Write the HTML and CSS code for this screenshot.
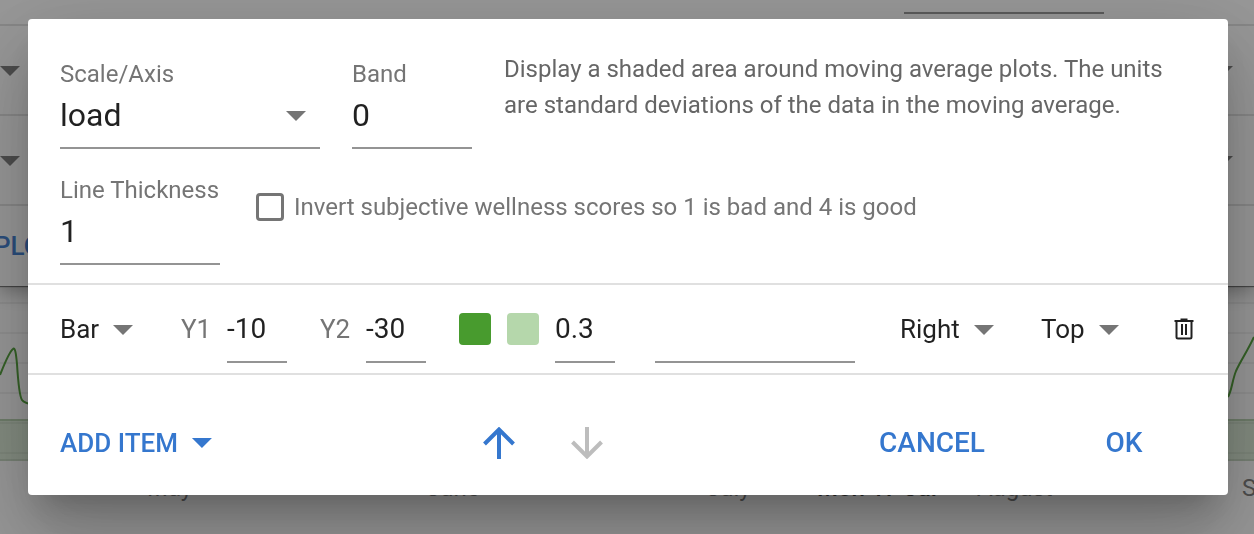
FILE: index.html
```html
<!DOCTYPE html>
<html lang="en">
<head>
  <meta charset="UTF-8" />
  <meta name="viewport" content="width=device-width, initial-scale=1.0"/>
  <title>Edit Plot</title>
  <link rel="stylesheet" href="styles.css">
</head>
<body>
  <div class="page" aria-hidden="true">
    <div class="plots">
      <div class="plot-top"><span class="plot-line"></span></div>
      <div class="plot-row"><span class="caret"></span><span class="caret"></span></div>
      <div class="plot-row"><span class="caret"></span><span class="caret"></span></div>
      <div class="plot-add"><span>PLOT</span></div>
    </div>
    <div class="chart">
      <svg class="curve" width="40" height="175" viewBox="0 0 40 175">
        <path d="M0 89C4 79 9 66 13 63C15 61 16 67 17 78C18 94 20 111 22 114C24 117 29 118 35 119"/>
      </svg>
      <svg class="curve" width="40" height="175" viewBox="0 0 40 175">
        <path d="M14 111C18 104 18 95 22 85C27 74 33 66 40 51"/>
      </svg>
    </div>
    <div class="months">
      <span>May</span><span>June</span><span>July</span><b>Mon 17 Jul</b><span>August</span><span>S</span>
    </div>
  </div>

  <div class="overlay">
    <form class="dialog" role="dialog" aria-label="Edit plot">
      <div class="settings">
        <div class="row">
          <div class="field field-scale">
            <label for="scale">Scale/Axis</label>
            <div class="select">
              <select id="scale"><option>load</option></select>
              <span class="caret"></span>
            </div>
          </div>
          <div class="field field-band">
            <label for="band">Band</label>
            <input type="text" id="band" value="0">
          </div>
          <p class="help">Display a shaded area around moving average plots. The units are standard deviations of the data in the moving average.</p>
        </div>
        <div class="row row-second">
          <div class="field field-thickness">
            <label for="thickness">Line Thickness</label>
            <input type="text" id="thickness" value="1">
          </div>
          <div class="check">
            <input type="checkbox" id="invert">
            <label for="invert">Invert subjective wellness scores so 1 is bad and 4 is good</label>
          </div>
        </div>
      </div>

      <div class="item">
        <div class="select item-type">
          <select aria-label="Type"><option>Bar</option></select>
          <span class="caret"></span>
        </div>
        <div class="number">
          <label for="y1">Y1</label>
          <input type="text" id="y1" value="-10">
        </div>
        <div class="number">
          <label for="y2">Y2</label>
          <input type="text" id="y2" value="-30">
        </div>
        <div class="colors">
          <button type="button" class="swatch" aria-label="Line color"></button>
          <button type="button" class="swatch swatch-fill" aria-label="Fill color"></button>
          <input type="text" class="opacity" aria-label="Opacity" value="0.3">
        </div>
        <input type="text" class="item-text" aria-label="Text">
        <div class="item-end">
          <div class="select item-align">
            <select aria-label="Horizontal position"><option>Right</option></select>
            <span class="caret"></span>
          </div>
          <div class="select item-valign">
            <select aria-label="Vertical position"><option>Top</option></select>
            <span class="caret"></span>
          </div>
          <button type="button" class="delete" aria-label="Delete">
            <svg width="24" height="24" viewBox="0 0 24 24">
              <path d="M2.500 4H21.500M8.500 2.500H15.500M4.500 4V20Q4.500 21.500 6 21.500H18Q19.500 21.500 19.500 20V4M10 7V18M14 7V18"/>
            </svg>
          </button>
        </div>
      </div>

      <div class="actions">
        <button type="button" class="add">ADD ITEM <span class="caret"></span></button>
        <div class="move">
          <button type="button" aria-label="Move up">
            <svg width="32" height="32" viewBox="0 0 32 32"><path d="M16 32V3M1.500 17L16 2.500L30.500 17"/></svg>
          </button>
          <button type="button" aria-label="Move down" disabled>
            <svg width="32" height="32" viewBox="0 0 32 32"><path d="M16 0V29M1.500 15L16 29.500L30.500 15"/></svg>
          </button>
        </div>
        <div class="confirm">
          <button type="button">CANCEL</button>
          <button type="submit">OK</button>
        </div>
      </div>
    </form>
  </div>
</body>
</html>
```
FILE: styles.css
```css
* {
  box-sizing: border-box;
}

body {
  margin: 0;
  font-family: Roboto, "Liberation Sans", sans-serif;
  font-size: 24px;
  line-height: 28px;
  color: rgba(0, 0, 0, 0.87);
}

button, input, select {
  font: inherit;
  color: inherit;
  margin: 0;
  padding: 0;
  border: none;
  border-radius: 0;
  background: none;
  outline: none;
}

button {
  cursor: pointer;
}

.caret {
  width: 20px;
  height: 10px;
  background: #757575;
  clip-path: polygon(0 0, 100% 0, 50% 100%);
}

/* page behind the dialog */
.page {
  height: 100vh;
  overflow: hidden;
  background: #fff;
}

.plots {
  box-shadow: 0 1px 1px rgba(0, 0, 0, 0.5), 0 4px 20px rgba(0, 0, 0, 0.4);
}

.plot-top {
  display: flex;
  justify-content: flex-end;
  height: 26px;
  padding: 12px 150px 0 0;
  border-bottom: 2px solid #e0e0e0;
}

.plot-line {
  width: 200px;
  height: 2px;
  background: #8f8f8f;
}

.plot-row {
  display: flex;
  justify-content: space-between;
  align-items: center;
  height: 90px;
  padding: 2px 21px 0 0;
  border-bottom: 2px solid #e0e0e0;
}

.plot-add {
  display: flex;
  align-items: center;
  height: 80px;
  font-size: 26px;
  font-weight: 500;
  color: #3577ce;
}

.plot-add span {
  margin-left: -6px;
}

.chart {
  display: flex;
  justify-content: space-between;
  height: 175px;
  border-bottom: 2px solid #c4d6bf;
  background:
    linear-gradient(#b3ceab, #b3ceab) 0 133px / 100% 2px no-repeat,
    linear-gradient(rgba(72, 155, 46, 0.2), rgba(72, 155, 46, 0.2)) 0 135px / 100% 40px no-repeat,
    repeating-linear-gradient(transparent 0 16px, rgba(0, 0, 0, 0.06) 16px 18px, transparent 18px 30px);
}

.curve {
  fill: none;
  stroke: #489b2e;
  stroke-width: 2;
}

.months {
  display: flex;
  padding: 13px 0 0 147px;
  color: #757575;
  white-space: nowrap;
}

.months span {
  flex: 0 0 280px;
}

.months span:nth-child(3) {
  flex-basis: 110px;
}

.months b {
  flex: 0 0 160px;
  font-weight: 500;
  color: #333;
}

.months span:nth-child(5) {
  flex-basis: 265px;
}

/* dialog */
.overlay {
  position: fixed;
  inset: 0;
  padding: 19px 26px 0 28px;
  background: rgba(33, 33, 33, 0.46);
}

.dialog {
  border-radius: 4px;
  background: #fff;
  box-shadow:
    0 22px 30px -14px rgba(0, 0, 0, 0.2),
    0 48px 76px 6px rgba(0, 0, 0, 0.14),
    0 18px 92px 16px rgba(0, 0, 0, 0.12);
}

.settings {
  padding: 32px 32px 18px;
  border-bottom: 2px solid #e0e0e0;
}

.row {
  display: flex;
  align-items: flex-end;
  gap: 32px;
}

.row-second {
  align-items: flex-start;
  gap: 36px;
  margin-top: 27px;
}

.field {
  display: flex;
  flex-direction: column;
}

.field label, .check, .number label {
  color: #757575;
}

.field-scale {
  width: 260px;
}

.field-band {
  width: 120px;
}

.field-thickness {
  width: 160px;
}

.dialog input[type="text"] {
  width: 100%;
  border-bottom: 2px solid #949494;
}

.field input[type="text"], .field .select {
  height: 61px;
  padding-bottom: 5px;
  border-bottom: 2px solid #949494;
  font-size: 32px;
}

.field .caret {
  margin-right: 14px;
}

.select {
  display: grid;
  align-items: center;
}

.select select, .select .caret {
  grid-area: 1 / 1;
}

.select select {
  width: 100%;
  height: 100%;
  appearance: none;
}

.select .caret {
  justify-self: end;
  margin-top: 2px;
  pointer-events: none;
}

.help {
  flex: 1;
  align-self: flex-start;
  margin: 0;
  padding-right: 32px;
  line-height: 36px;
  color: #666;
}

.row:first-child {
  min-height: 98px;
}

.check {
  display: flex;
  align-items: center;
  gap: 10px;
  padding-top: 17px;
}

.check input {
  width: 28px;
  height: 28px;
  border: 3px solid #757575;
  border-radius: 4px;
  appearance: none;
}

.check input:checked {
  background: #3577ce;
}

.item {
  display: flex;
  align-items: center;
  height: 90px;
  padding: 0 32px;
  border-bottom: 2px solid #e0e0e0;
  font-size: 26px;
}

.item input[type="text"] {
  height: 68px;
  font-size: 28px;
}

.item-type {
  width: 73px;
  margin-right: 48px;
}

.number {
  display: flex;
  align-items: center;
  width: 106px;
  margin-right: 33px;
}

.number label {
  flex: 0 0 46px;
}

.colors {
  display: flex;
  align-items: center;
  gap: 16px;
}

.swatch {
  width: 32px;
  height: 32px;
  border-radius: 4px;
  background: #489b2e;
}

.swatch-fill {
  background: #b5d7ab;
}

.item input.opacity {
  width: 60px;
}

.item input.item-text {
  width: 200px;
  margin-left: 40px;
}

.item-end {
  display: flex;
  align-items: center;
  margin-left: auto;
}

.item-align {
  width: 94px;
  margin-right: 47px;
}

.item-valign {
  width: 78px;
  margin-right: 53px;
}

.delete {
  display: flex;
}

svg path {
  fill: none;
}

.delete path {
  stroke: #212121;
  stroke-width: 2;
}

.actions {
  display: flex;
  align-items: center;
  height: 120px;
  padding: 16px 40px 0 32px;
  font-weight: 500;
  color: #3577ce;
}

.actions .caret {
  background: #3577ce;
}

.add {
  display: flex;
  align-items: center;
  gap: 14px;
  width: 152px;
  font-size: 26px;
  white-space: nowrap;
}

.move {
  display: flex;
  gap: 16px;
  margin-left: 251px;
}

.move button {
  display: flex;
  justify-content: center;
  width: 72px;
}

.move path {
  stroke: #3577ce;
  stroke-width: 4;
}

.move button:disabled path {
  stroke: #bdbdbd;
}

.confirm {
  display: flex;
  gap: 43px;
  margin-left: auto;
}

.confirm button {
  min-width: 128px;
  padding: 0 32px;
  font-size: 28px;
}
```
